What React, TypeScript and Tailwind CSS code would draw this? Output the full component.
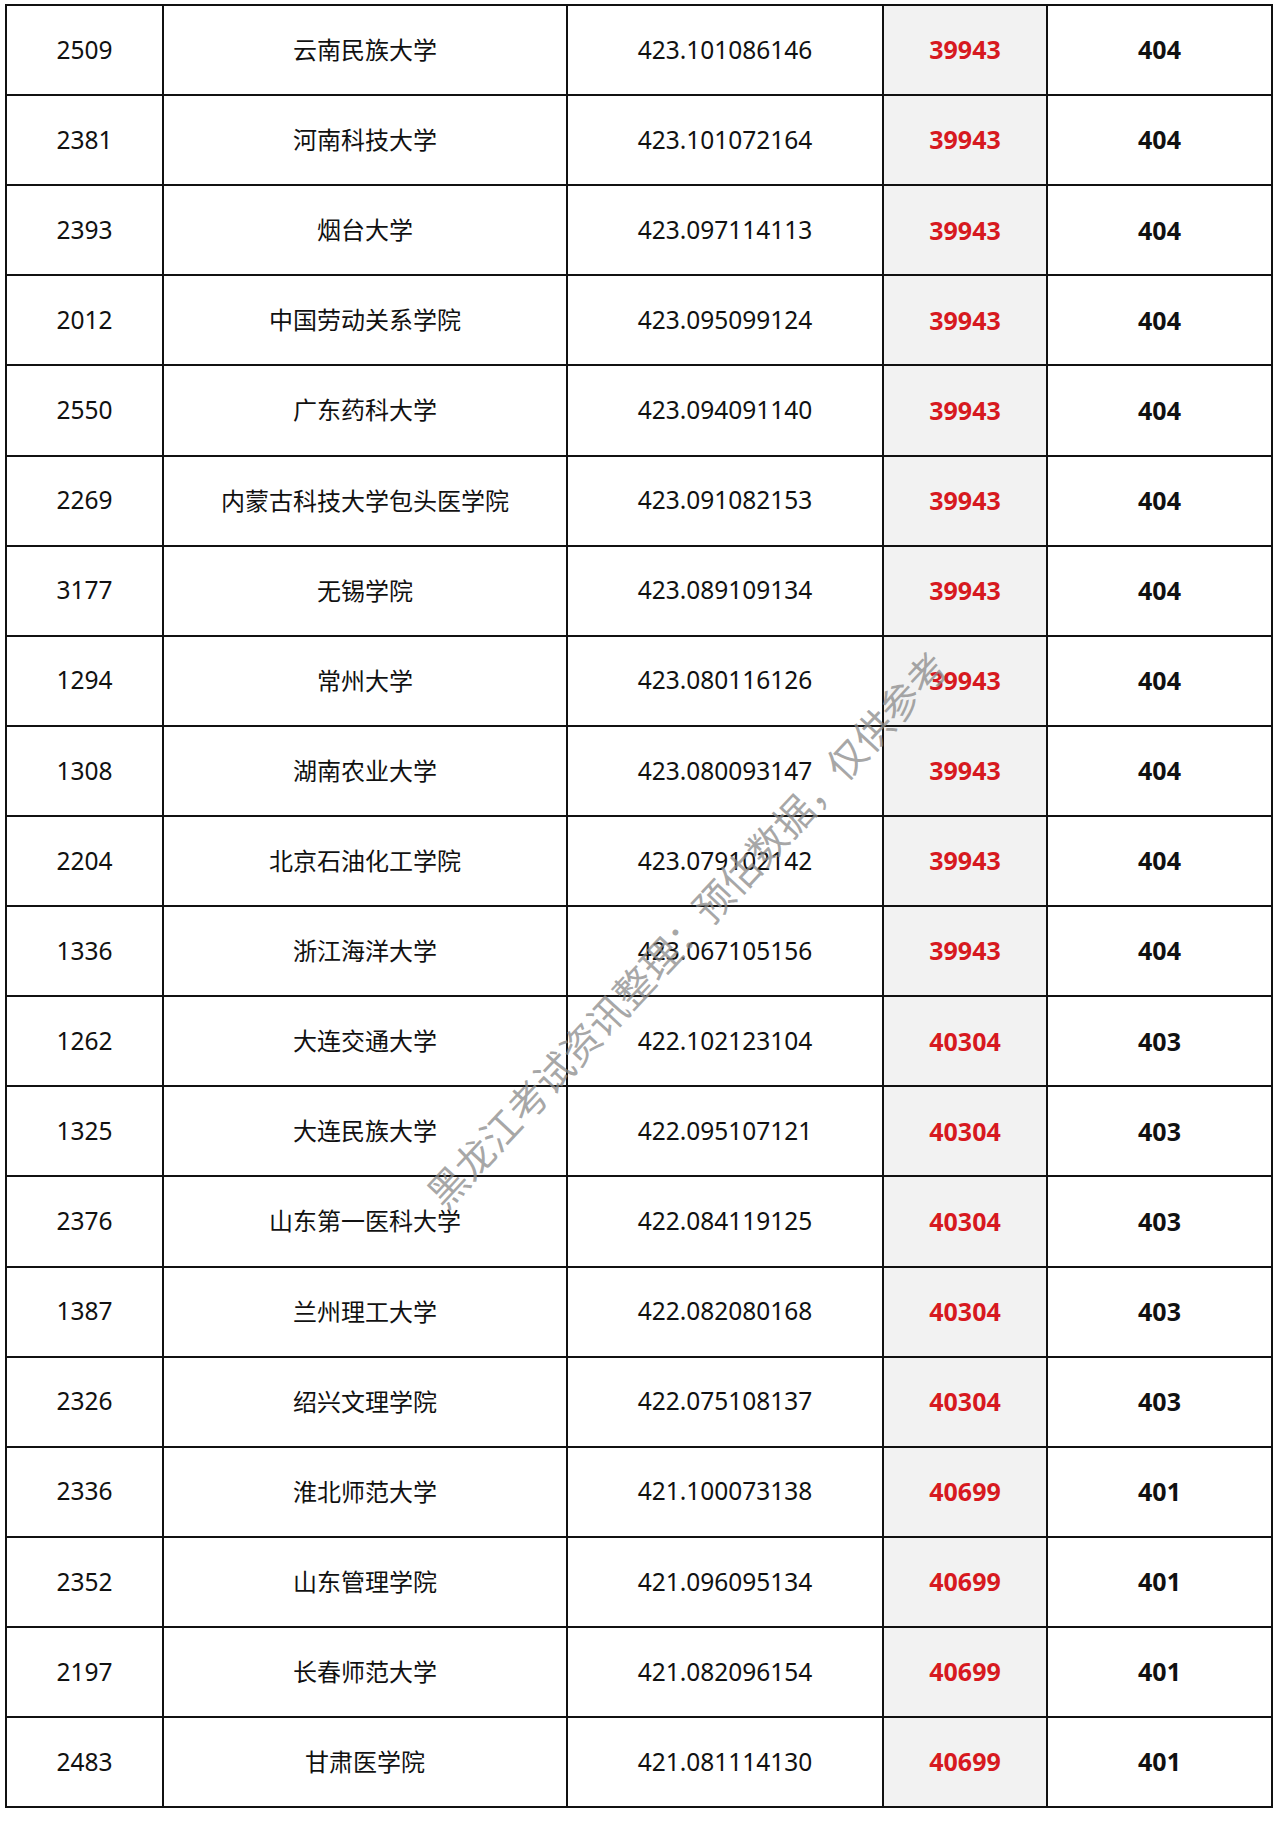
const rows: [string, string, string, string, string][] = [
  ["2509", "云南民族大学", "423.101086146", "39943", "404"],
  ["2381", "河南科技大学", "423.101072164", "39943", "404"],
  ["2393", "烟台大学", "423.097114113", "39943", "404"],
  ["2012", "中国劳动关系学院", "423.095099124", "39943", "404"],
  ["2550", "广东药科大学", "423.094091140", "39943", "404"],
  ["2269", "内蒙古科技大学包头医学院", "423.091082153", "39943", "404"],
  ["3177", "无锡学院", "423.089109134", "39943", "404"],
  ["1294", "常州大学", "423.080116126", "39943", "404"],
  ["1308", "湖南农业大学", "423.080093147", "39943", "404"],
  ["2204", "北京石油化工学院", "423.079102142", "39943", "404"],
  ["1336", "浙江海洋大学", "423.067105156", "39943", "404"],
  ["1262", "大连交通大学", "422.102123104", "40304", "403"],
  ["1325", "大连民族大学", "422.095107121", "40304", "403"],
  ["2376", "山东第一医科大学", "422.084119125", "40304", "403"],
  ["1387", "兰州理工大学", "422.082080168", "40304", "403"],
  ["2326", "绍兴文理学院", "422.075108137", "40304", "403"],
  ["2336", "淮北师范大学", "421.100073138", "40699", "401"],
  ["2352", "山东管理学院", "421.096095134", "40699", "401"],
  ["2197", "长春师范大学", "421.082096154", "40699", "401"],
  ["2483", "甘肃医学院", "421.081114130", "40699", "401"],
];

const cell = "h-[90.12px] flex items-center justify-center border-r-2 border-b-2 border-[#111]";

export default function App() {
  return (
    <div
      className="relative min-h-[1824px] w-[1280px] bg-white text-[24px] text-[#111]"
      style={{ fontFamily: '"Noto Sans", "Noto Sans CJK SC", sans-serif' }}
    >
      <div className="pl-[5px] pt-[4px]">
        <div className="grid w-fit grid-cols-[157px_404px_316px_164px_225px] border-l-2 border-t-2 border-[#111]">
          {rows.map((r) => (
            <div key={r[0]} className="contents">
              <div className={`${cell} text-[24.5px]`}>{r[0]}</div>
              <div className={cell}>{r[1]}</div>
              <div className={`${cell} text-[24.5px]`}>{r[2]}</div>
              <div className={`${cell} bg-[#f2f2f2] text-[25px] font-bold text-[#d71920]`}>{r[3]}</div>
              <div className={`${cell} text-[25px] font-bold`}>{r[4]}</div>
            </div>
          ))}
        </div>
      </div>

      {/* watermark */}
      <div
        className="pointer-events-none absolute left-[686px] top-[929px] -translate-x-1/2 -translate-y-1/2 rotate-[-47deg] whitespace-nowrap text-[39px] leading-none text-[#8a8a8a]/75"
        style={{ fontFamily: '"Noto Sans CJK SC", sans-serif' }}
      >
        黑龙江考试资讯整理：预估数据，仅供参考
      </div>
    </div>
  );
}
